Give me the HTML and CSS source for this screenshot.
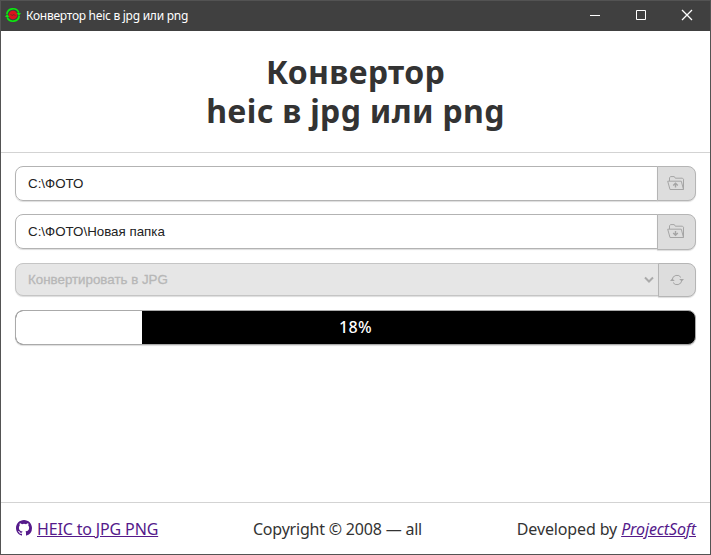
FILE: index.html
```html
<!DOCTYPE html>
<html lang="ru">
<head>
<meta charset="utf-8">
<title>Конвертор heic в jpg или png</title>
<link rel="stylesheet" href="styles.css">
</head>
<body>
<div class="window">
  <div class="titlebar">
    <svg class="app-icon" viewBox="0 0 16 16"><circle cx="8" cy="8" r="4.3" fill="#d9131d"/><path d="M5.500 7l2 2 1-2 2 2" fill="none" stroke="#7b2b20"/><path d="M1.800 7A6.300 6.300 0 0 1 13.800 5.600M14.200 9A6.300 6.300 0 0 1 2.200 10.400" fill="none" stroke="#0be80f" stroke-width="1.700"/><path d="M11.500 6H16l-2 3zM0 10l2-3 2.500 3z" fill="#0be80f"/></svg>
    <span class="caption">Конвертор heic в jpg или png</span>
    <div class="controls">
      <svg viewBox="0 0 46 30"><path d="M18 15.500h10"/></svg>
      <svg viewBox="0 0 46 30"><path d="M18.500 10.500h9v9h-9z"/></svg>
      <svg viewBox="0 0 46 30"><path d="M18 10l10 10M28 10L18 20" class="cross"/></svg>
    </div>
  </div>
  <header><h1>Конвертор<br>heic в jpg или png</h1></header>
  <main>
    <div class="row">
      <div class="field">C:\ФОТО</div>
      <div class="btn source"><svg viewBox="0 0 18 15"><path d="M3 13.500L.7 5.200h13.600l2.200 8.300zM2.500 5V1.800l1-1.200h3.800l1 1.600h7.200l1 1v10.200"/><path d="M8.500 11.500V7.500M6.200 9.500l2.300-2.300 2.300 2.300" class="arrow"/></svg></div>
    </div>
    <div class="row">
      <div class="field">C:\ФОТО\Новая папка</div>
      <div class="btn"><svg viewBox="0 0 18 15"><path d="M3 13.500L.7 5.200h13.600l2.200 8.300zM2.500 5V1.800l1-1.200h3.800l1 1.600h7.200l1 1v10.200"/><path d="M8.500 7v4M6.200 9l2.300 2.300 2.300-2.300" class="arrow"/></svg></div>
    </div>
    <div class="row select-row">
      <div class="field select"><span>Конвертировать в JPG</span><svg viewBox="0 0 10 8"><path d="M1 1.500l4 4 4-4"/></svg></div>
      <div class="btn"><svg class="sync" viewBox="0 0 14 12"><path d="M2.200 5.500A4.800 4.800 0 0 1 11 3.500M11.800 6.500A4.800 4.800 0 0 1 3 8.500"/><path d="M9.200 5H14L11.700 7.500zM0 7l2.300-2.500L4.800 7z" class="solid"/></svg></div>
    </div>
    <div class="progress"><div class="done" style="width:126px"></div><span>18%</span></div>
  </main>
  <footer>
    <a class="repo"><svg viewBox="0 0 16 16"><path d="M8 0C3.580 0 0 3.580 0 8c0 3.540 2.290 6.530 5.470 7.590.4.070.55-.17.55-.38 0-.19-.01-.82-.01-1.490-2.010.37-2.530-.49-2.690-.94-.09-.23-.48-.94-.82-1.130-.28-.15-.68-.52-.01-.53.63-.01 1.080.58 1.230.82.72 1.210 1.870.87 2.330.66.07-.52.28-.87.51-1.070-1.780-.2-3.640-.89-3.640-3.950 0-.87.31-1.590.82-2.150-.08-.2-.36-1.020.08-2.120 0 0 .67-.21 2.200.82a7.600 7.600 0 0 1 4 0c1.530-1.040 2.200-.82 2.200-.82.44 1.100.16 1.920.08 2.120.51.56.82 1.270.82 2.150 0 3.070-1.870 3.750-3.650 3.950.29.25.54.73.54 1.480 0 1.070-.01 1.930-.01 2.200 0 .21.15.46.55.38A8.010 8.010 0 0 0 16 8c0-4.420-3.580-8-8-8z"/></svg><span>HEIC to JPG PNG</span></a>
    <span class="copy">Copyright © 2008 — all</span>
    <span class="dev">Developed by <a>ProjectSoft</a></span>
  </footer>
</div>
</body>
</html>
```

FILE: styles.css
```css
* { box-sizing: border-box; }
body { margin: 0; font-family: "Noto Sans", sans-serif; color: #333; background: #fff; }
.window { height: 555px; border: 1px solid #535353; display: flex; flex-direction: column; }
.titlebar { height: 30px; background: #404040; display: flex; align-items: center; color: #fff; flex: none; }
.app-icon { width: 16px; height: 16px; margin: -2px 5px 0 4px; }
.caption { font-size: 12px; letter-spacing: -0.27px; white-space: nowrap; margin-top: -2px; }
.controls { margin-left: auto; display: flex; }
.controls svg { width: 46px; height: 30px; fill: none; stroke: #fff; stroke-width: 1; margin-top: -2px; }
.controls .cross { stroke-width: 1.3; }
header { height: 122px; border-bottom: 1px solid #d3d3d3; padding-top: 21px; flex: none; }
h1 { margin: 0; text-align: center; font-size: 32px; line-height: 39px; font-weight: 700; white-space: nowrap; letter-spacing: 0.33px; }
main { flex: 1; padding: 13px 14px; }
.row { display: flex; height: 36px; margin-bottom: 12px; }
.field { flex: 1; border: 1px solid #b3b3b3; border-radius: 8px 0 0 8px; height: 35px; padding: 0 12px; font: 13.333px/33px "Liberation Sans", Arial, sans-serif; color: #222; box-shadow: 0 1px 1px #ddd; }
.btn { width: 39px; height: 36px; margin-left: -1px; border: 1px solid #b5b5b5; border-radius: 0 8px 8px 0; background: #ddd; display: flex; align-items: center; justify-content: center; box-shadow: 0 1px 1px #ddd; }
.btn.source { height: 35px; }
.btn svg { width: 18px; height: 15px; fill: none; stroke: #a5a5a5; margin: -1px 1px 0 0; }
.btn svg.sync { width: 14px; height: 12px; margin-top: 0; }
.btn .arrow { stroke-width: 1.4; }
.btn .solid { fill: #a5a5a5; stroke: none; }
.select-row { height: 34px; margin: 13px 0; }
.select-row .btn { height: 34px; width: 38px; }
.select { height: 33px; line-height: 31px; background: #e6e6e6; color: #b7b7b7; border-color: #c5c5c5; display: flex; align-items: center; justify-content: space-between; padding-right: 4px; -webkit-text-stroke: 0.3px #b7b7b7; }
.select svg { width: 10px; height: 8px; fill: none; stroke: #aaa; stroke-width: 2; }
.progress { height: 35px; border: 1px solid #aaa; border-radius: 8px; background: #000; overflow: hidden; display: grid; align-items: center; box-shadow: 0 1px 1px #ddd; }
.progress > * { grid-area: 1 / 1; }
.done { height: 33px; background: #fff; }
.progress span { color: #fff; text-align: center; font-size: 16px; font-weight: 500; margin-top: -1px; letter-spacing: 0.3px; }
footer { height: 52px; border-top: 1px solid #d3d3d3; padding: 0 14px; display: flex; justify-content: space-between; align-items: center; font-size: 16px; white-space: nowrap; flex: none; letter-spacing: -0.2px; }
footer a { color: #551a8b; text-decoration: underline; }
.repo { display: flex; align-items: center; letter-spacing: -0.15px; }
.repo svg { width: 16px; height: 16px; margin: -2px 5px 0 1px; fill: #551a8b; }
.dev { letter-spacing: -0.13px; }
.dev a { font-style: italic; }
```
